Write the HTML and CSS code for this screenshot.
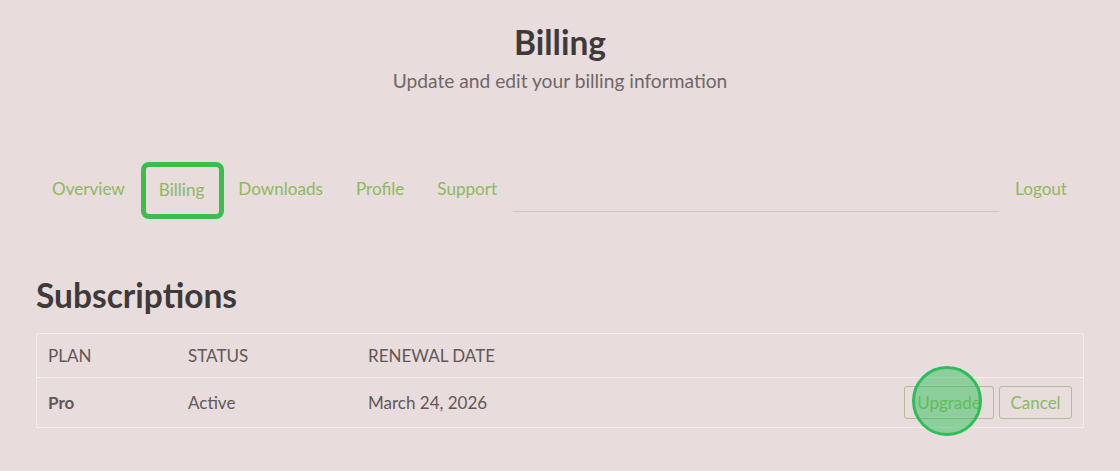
FILE: index.html
```html
<!DOCTYPE html>
<html>
<head>
<meta charset="utf-8">
<link rel="stylesheet" href="styles.css">
</head>
<body>
<div class="page">
  <header class="hero">
    <h1 class="title">Billing</h1>
    <p class="subtitle">Update and edit your billing information</p>
  </header>
  <nav class="nav">
    <a class="nav-link">Overview</a>
    <a class="nav-link active">Billing</a>
    <a class="nav-link">Downloads</a>
    <a class="nav-link">Profile</a>
    <a class="nav-link last">Support</a>
    <div class="nav-spacer"></div>
    <a class="nav-link logout">Logout</a>
  </nav>
  <section class="subs">
    <h2 class="subs-title">Subscriptions</h2>
    <div class="table">
      <div class="row head">
        <div class="c plan">PLAN</div>
        <div class="c status">STATUS</div>
        <div class="c date">RENEWAL DATE</div>
      </div>
      <div class="row body">
        <div class="c plan bold">Pro</div>
        <div class="c status">Active</div>
        <div class="c date">March 24, 2026</div>
        <div class="actions">
          <span class="btn upgrade">Upgrade<span class="tap"></span></span>
          <span class="btn cancel">Cancel</span>
        </div>
      </div>
    </div>
  </section>
</div>
</body>
</html>
```
FILE: styles.css
```css
html, body {
  margin: 0;
  padding: 0;
  background: #e9dcdc;
}
body {
  font-family: "Lato", "Open Sans", sans-serif;
  color: #5a5353;
  width: 1120px;
  height: 471px;
  overflow: hidden;
}
.page {
  padding: 0 36px 0 36px;
}
.hero {
  text-align: center;
  padding-top: 22px;
}
.title {
  margin: 0;
  font-size: 33.5px;
  font-weight: 700;
  color: #3e3a3a;
  line-height: 40px;
}
.subtitle {
  margin: 7px 0 0 0;
  font-size: 19.2px;
  color: #6e6767;
  line-height: 24px;
}
.nav {
  display: flex;
  align-items: center;
  margin-top: 68px;
  height: 56px;
  padding-left: 16px;
}
.nav-link {
  font-size: 17.1px;
  color: #8cba5c;
  line-height: 20px;
  margin-right: 33px;
  position: relative;
}
.nav-link.active {
  border: 5px solid #3cbd4a;
  border-radius: 8px;
  padding: 13px 15px 14px 13px;
  margin: 2px 14px 0 -17px;
}
.nav-link.last {
  margin-right: 16px;
}
.nav-spacer {
  flex: 1;
  align-self: flex-end;
  border-bottom: 1px solid #d3c3c3;
  margin: 0 16px 5px 0;
}
.nav-link.logout {
  margin-right: 17px;
}
.subs {
  margin-top: 58px;
}
.subs-title {
  margin: 0;
  font-size: 33.5px;
  font-weight: 700;
  color: #3e3a3a;
  line-height: 40px;
}
.table {
  margin-top: 18px;
  border: 1px solid #f4eded;
  width: 1046px;
}
.row {
  display: flex;
  align-items: center;
  font-size: 17px;
  color: #5f5858;
}
.row.head {
  height: 43px;
  border-bottom: 1px solid #f4eded;
}
.row.body {
  height: 49px;
}
.c {
  padding-left: 11px;
}
.plan { width: 129px; }
.status { width: 169px; }
.date { width: 200px; }
.bold { font-weight: 700; }
.actions {
  margin-left: auto;
  display: flex;
  gap: 5px;
  padding-right: 11px;
}
.btn {
  position: relative;
  display: inline-block;
  box-sizing: border-box;
  height: 33px;
  border: 1px solid #b1bb95;
  border-radius: 3px;
  color: #8cba5c;
  font-size: 17px;
  line-height: 31px;
  text-align: center;
}
.upgrade { width: 90px; }
.cancel { width: 73px; }
.tap {
  position: absolute;
  box-sizing: border-box;
  left: 7px;
  top: -21px;
  width: 70px;
  height: 70px;
  border-radius: 50%;
  border: 3px solid #2dbe5a;
  background: rgba(52, 192, 92, 0.5);
}
```
